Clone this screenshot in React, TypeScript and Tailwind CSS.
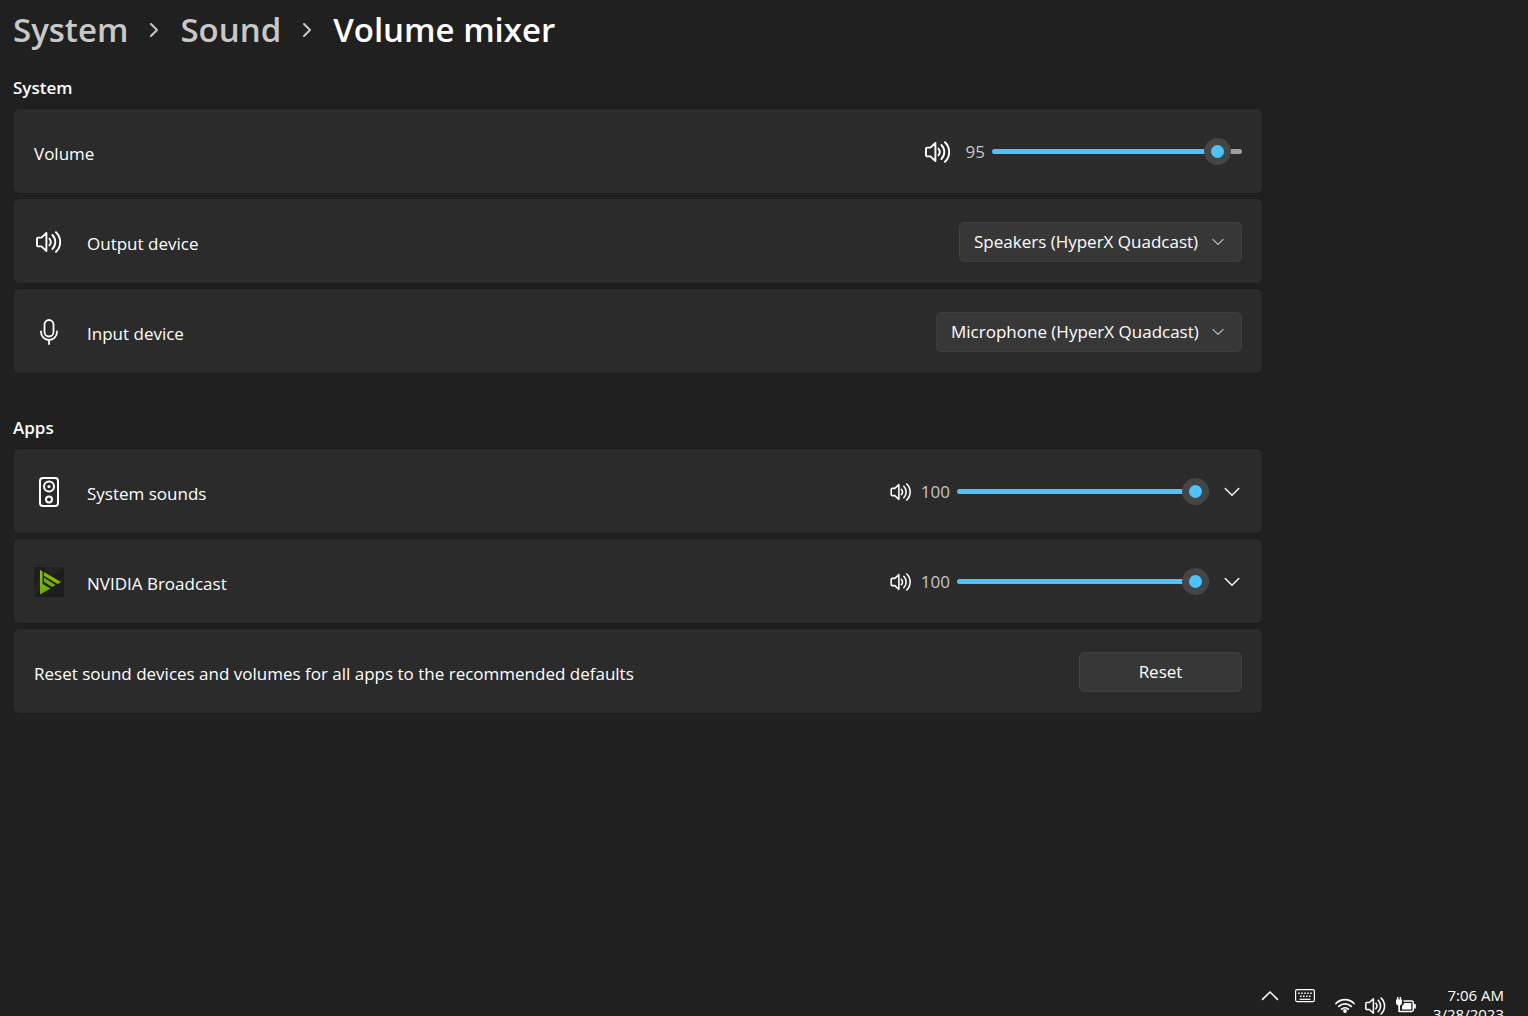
import { useState } from 'react'
import type { CSSProperties, ReactNode } from 'react'
import clsx from 'clsx'

interface IconProps {
  className?: string
}

function SpeakerIcon({ className }: IconProps) {
  return (
    <svg
      viewBox="0 0 26 22"
      fill="none"
      stroke="currentColor"
      strokeWidth="1.9"
      strokeLinecap="round"
      strokeLinejoin="round"
      className={className}
      aria-hidden="true"
    >
      <path d="M2.2 6.6h3.2L10.4 2v18l-5-4.6H2.2A1.2 1.2 0 0 1 1 14.2V7.8A1.2 1.2 0 0 1 2.2 6.6Z" />
      <path d="M13.4 7.6a5.2 5.2 0 0 1 0 6.8" />
      <path d="M16.4 4a10 10 0 0 1 0 14" />
      <path d="M20 1.2a13.6 13.6 0 0 1 0 19.6" />
    </svg>
  )
}

function MicIcon() {
  return (
    <svg
      viewBox="0 0 20 26"
      fill="none"
      stroke="currentColor"
      strokeWidth="1.8"
      strokeLinecap="round"
      className="h-[26px] w-5"
      aria-hidden="true"
    >
      <rect x="5.5" y="1" width="9" height="16.5" rx="4.5" />
      <path d="M2 12.5v.5a8 8 0 0 0 16 0v-.5M10 21v4" />
    </svg>
  )
}

function SpeakerBoxIcon() {
  return (
    <svg viewBox="0 0 20 30" fill="none" stroke="currentColor" strokeWidth="2" className="h-[30px] w-5" aria-hidden="true">
      <rect x="1" y="1" width="18" height="28" rx="3" />
      <circle cx="10" cy="9.5" r="5" />
      <circle cx="10" cy="9.5" r="1.6" fill="currentColor" stroke="none" />
      <circle cx="10" cy="22.5" r="3" />
    </svg>
  )
}

function BroadcastIcon() {
  return (
    <svg viewBox="0 0 30 30" className="size-[30px]" aria-hidden="true">
      <defs>
        <linearGradient id="broadcast" x1="0" y1="0" x2="0" y2="1">
          <stop offset="0" stopColor="#8fce00" />
          <stop offset="1" stopColor="#69a800" />
        </linearGradient>
      </defs>
      <path d="M0 0h30v30H0z" fill="#1d1d1d" />
      <path d="M9 0h21L18 9zM0 30l6-7V9L0 21z" fill="#242424" />
      <path d="M6 3l2.5 1.5v12.5l8 4.5L6 27.5z" fill="url(#broadcast)" />
      <path d="M10 5L27 15l-3.5 2L10 8.8z" fill="#7fbd00" />
      <path d="M10 10.5L21.5 18l-3.3 2L10 14.8z" fill="#6fae00" />
    </svg>
  )
}

function Chevron({ className }: IconProps) {
  return (
    <svg
      viewBox="0 0 16 10"
      fill="none"
      stroke="currentColor"
      strokeWidth="1.4"
      strokeLinecap="round"
      strokeLinejoin="round"
      className={className}
      aria-hidden="true"
    >
      <path d="M1.2 1.5L8 8.2l6.8-6.7" />
    </svg>
  )
}

function Crumb({ children }: { children: ReactNode }) {
  return (
    <>
      <a href="#" className="text-[#c8c8c8]">
        {children}
      </a>
      <svg viewBox="0 0 10 14" fill="none" stroke="#c8c8c8" strokeWidth="2" className="mx-[21px] h-[14px] w-[10px]" aria-hidden="true">
        <path d="M2 1l6 6-6 6" strokeLinecap="round" strokeLinejoin="round" />
      </svg>
    </>
  )
}

function Section({ title, children }: { title: string; children: ReactNode }) {
  return (
    <section className="mb-[27px]">
      <h2 className="flex h-[49px] items-center pt-1.5 text-[17px] font-semibold">{title}</h2>
      <div className="ml-px space-y-1.5">{children}</div>
    </section>
  )
}

interface RowProps {
  label: ReactNode
  icon?: ReactNode
  children: ReactNode
}

function Row({ label, icon, children }: RowProps) {
  return (
    <div className="flex h-[84px] items-center rounded-[5px] bg-[#2b2b2b] px-5 pt-0.5 ring-1 ring-[#1d1d1d]">
      {icon && <div className="mr-[23px] flex w-[30px] justify-center">{icon}</div>}
      <div className="flex-1 pt-1">{label}</div>
      <div className="flex items-center">{children}</div>
    </div>
  )
}

interface VolumeSliderProps {
  id: string
  initial: number
  className: string
}

function VolumeSlider({ id, initial, className }: VolumeSliderProps) {
  const [value, setValue] = useState(initial)

  return (
    <>
      <output htmlFor={id} className="mr-[7px] w-[34px] text-right text-[#c5c5c5]">
        {value}
      </output>
      <input
        id={id}
        type="range"
        min={0}
        max={100}
        value={value}
        onChange={(e) => setValue(Number(e.target.value))}
        style={{ '--fill': `${value}%` } as CSSProperties}
        className={clsx(
          'mb-0.5 h-[27px] appearance-none bg-transparent',
          '[&::-webkit-slider-runnable-track]:h-[5px] [&::-webkit-slider-runnable-track]:rounded-full',
          '[&::-webkit-slider-runnable-track]:bg-[linear-gradient(to_right,#4cc2ff_var(--fill),#9f9f9f_var(--fill))]',
          '[&::-webkit-slider-thumb]:-mt-[11px] [&::-webkit-slider-thumb]:size-[27px] [&::-webkit-slider-thumb]:appearance-none',
          '[&::-webkit-slider-thumb]:rounded-full [&::-webkit-slider-thumb]:border-[7px] [&::-webkit-slider-thumb]:border-[#454545]',
          '[&::-webkit-slider-thumb]:bg-[#4cc2ff]',
          className,
        )}
      />
    </>
  )
}

function DeviceSelect({ id, device }: { id: string; device: string }) {
  return (
    <div className="relative">
      <select
        id={id}
        className="h-10 appearance-none rounded-[5px] border border-[#3e3e3e] bg-[#373737] pr-[42px] pl-[14px] text-white"
      >
        <option>{device}</option>
      </select>
      <Chevron className="pointer-events-none absolute top-4 right-[18px] h-2 w-3 text-[#c5c5c5]" />
    </div>
  )
}

function AppRow({ id, name, icon }: { id: string; name: string; icon: ReactNode }) {
  return (
    <Row label={<label htmlFor={id}>{name}</label>} icon={icon}>
      <SpeakerIcon className="mr-1 h-[18px] w-[22px]" />
      <VolumeSlider id={id} initial={100} className="w-[252px]" />
      <button type="button" aria-label={`Show ${name} settings`} className="ml-[13px] p-0.5">
        <Chevron className="h-[10px] w-4" />
      </button>
    </Row>
  )
}

function SystemTray() {
  return (
    <footer className="flex h-8 items-start overflow-hidden pr-6">
      <div className="ml-auto flex gap-4 pt-1">
        <Chevron className="mt-0.5 h-[11px] w-[18px] rotate-180" />
        <svg viewBox="0 0 20 14" fill="none" stroke="currentColor" strokeWidth="1.2" className="mt-px h-[14px] w-5" aria-hidden="true">
          <rect x=".6" y=".6" width="18.8" height="12" rx="1.5" />
          <path d="M3.2 4.2h14M5 7.2h11" strokeWidth="1.6" strokeDasharray="1.6 1.4" />
          <path d="M4.5 10.3h11" />
        </svg>
      </div>
      <div className="ml-5 flex gap-[10px] pt-[13px]">
        <svg viewBox="0 0 20 16" fill="none" stroke="currentColor" strokeWidth="1.8" strokeLinecap="round" className="h-4 w-5" aria-hidden="true">
          <path d="M1 6.5a12.5 12.5 0 0 1 18 0M3.8 9.4a8.7 8.7 0 0 1 12.4 0M6.7 12.2a4.8 4.8 0 0 1 6.6 0" />
          <circle cx="10" cy="14" r="1.9" fill="currentColor" stroke="none" />
        </svg>
        <SpeakerIcon className="h-[18px] w-[21px]" />
        <svg viewBox="0 0 20 17" fill="none" stroke="currentColor" strokeWidth="1.4" className="h-[17px] w-5" aria-hidden="true">
          <path
            d="M0 2.5h6V6a2.5 2.5 0 0 1-2 2.4V15H2.300V8.400A2.500 2.500 0 0 1 0 6zM1 0h1.400v3H1zM3.700 0h1.400v3H3.700z"
            fill="currentColor"
            stroke="none"
          />
          <path d="M3 14.500h12.500a1.800 1.800 0 0 0 1.800-1.800V5.800A1.800 1.800 0 0 0 15.500 4H7.500" />
          <path d="M8 6h7.300v6.500H6V9a4 4 0 0 0 2-3z" fill="currentColor" stroke="none" />
          <path d="M18.800 7v4.500" strokeWidth="2" />
        </svg>
      </div>
      <div className="ml-[17px] flex flex-col items-end pt-0.5 text-[15px] leading-[19px]">
        <span>7:06 AM</span>
        <span>3/28/2023</span>
      </div>
    </footer>
  )
}

export default function App() {
  return (
    <div className="flex h-screen flex-col overflow-hidden bg-[#202020] font-[Open_Sans,sans-serif] text-[17px] leading-6 text-white">
      <main className="w-full max-w-[1262px] flex-1 pl-[13px]">
        <nav aria-label="Breadcrumb" className="flex h-[60px] items-center text-[33px] font-semibold">
          <Crumb>System</Crumb>
          <Crumb>Sound</Crumb>
          <h1>Volume mixer</h1>
        </nav>

        <Section title="System">
          <Row label={<label htmlFor="volume">Volume</label>}>
            <SpeakerIcon className="h-[22px] w-[26px]" />
            <VolumeSlider id="volume" initial={95} className="w-[250px]" />
          </Row>
          <Row label={<label htmlFor="output">Output device</label>} icon={<SpeakerIcon className="h-[22px] w-[26px]" />}>
            <DeviceSelect id="output" device="Speakers (HyperX Quadcast)" />
          </Row>
          <Row label={<label htmlFor="input">Input device</label>} icon={<MicIcon />}>
            <DeviceSelect id="input" device="Microphone (HyperX Quadcast)" />
          </Row>
        </Section>

        <Section title="Apps">
          <AppRow id="system-sounds" name="System sounds" icon={<SpeakerBoxIcon />} />
          <AppRow id="broadcast-volume" name="NVIDIA Broadcast" icon={<BroadcastIcon />} />
          <Row label="Reset sound devices and volumes for all apps to the recommended defaults">
            <button type="button" className="h-10 w-[163px] rounded-[5px] border border-[#3e3e3e] bg-[#373737]">
              Reset
            </button>
          </Row>
        </Section>
      </main>
      <SystemTray />
    </div>
  )
}
